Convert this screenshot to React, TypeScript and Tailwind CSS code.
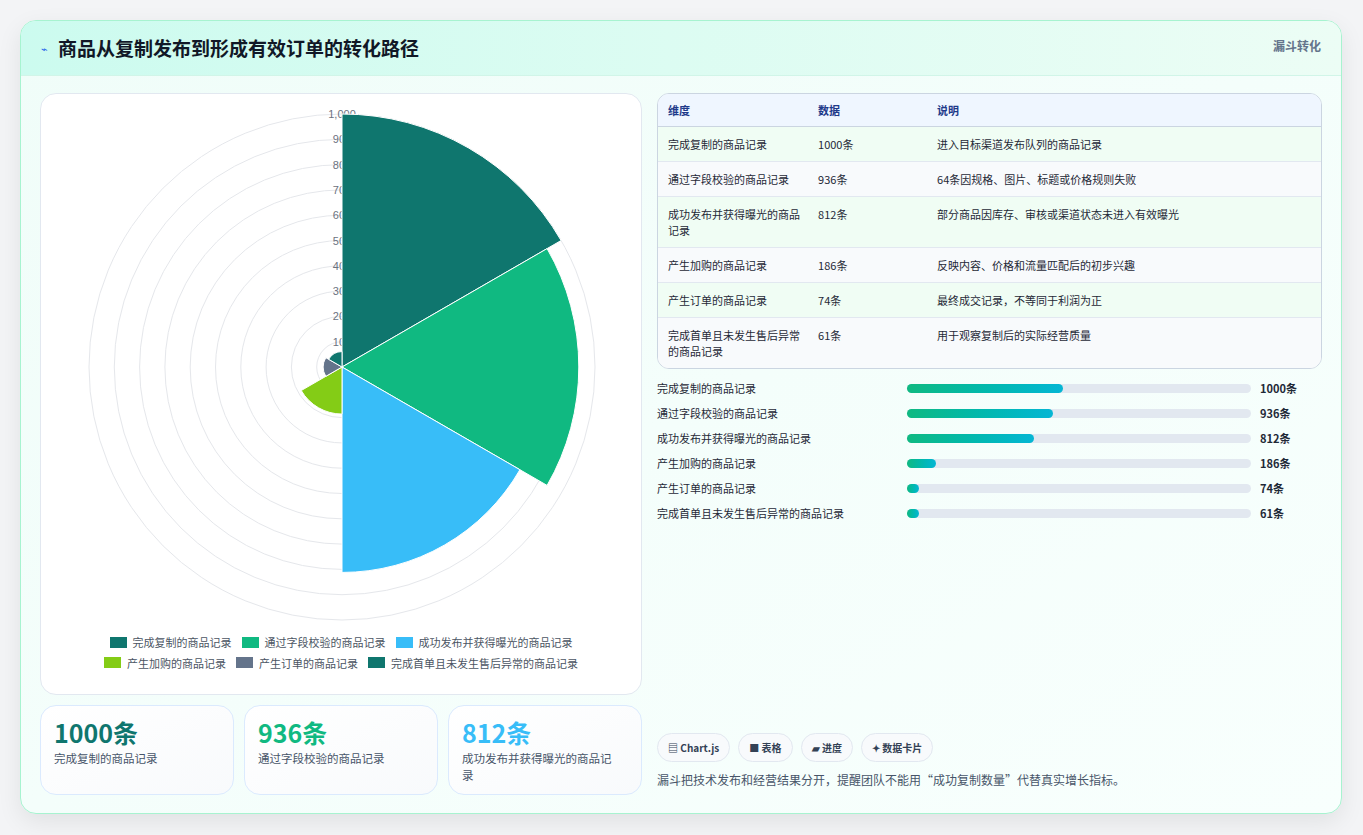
import React from "react";

const C = { cx: 301, cy: 273, R: 253 };
const data = [
  { label: "完成复制的商品记录", v: 1000, color: "#0f766e", note: "进入目标渠道发布队列的商品记录" },
  { label: "通过字段校验的商品记录", v: 936, color: "#10b981", note: "64条因规格、图片、标题或价格规则失败" },
  { label: "成功发布并获得曝光的商品记录", v: 812, color: "#38bdf8", note: "部分商品因库存、审核或渠道状态未进入有效曝光" },
  { label: "产生加购的商品记录", v: 186, color: "#84cc16", note: "反映内容、价格和流量匹配后的初步兴趣" },
  { label: "产生订单的商品记录", v: 74, color: "#64748b", note: "最终成交记录，不等同于利润为正" },
  { label: "完成首单且未发生售后异常的商品记录", v: 61, color: "#0f766e", note: "用于观察复制后的实际经营质量" },
];

function wedge(i: number, v: number) {
  const r = (v / 1000) * C.R;
  const a0 = ((i * 60 - 90) * Math.PI) / 180;
  const a1 = (((i + 1) * 60 - 90) * Math.PI) / 180;
  const x0 = C.cx + r * Math.cos(a0), y0 = C.cy + r * Math.sin(a0);
  const x1 = C.cx + r * Math.cos(a1), y1 = C.cy + r * Math.sin(a1);
  return `M${C.cx},${C.cy} L${x0},${y0} A${r},${r} 0 0 1 ${x1},${y1} Z`;
}

const font = { fontFamily: '"Noto Sans CJK SC", "Noto Sans", sans-serif' };

export default function App() {
  return (
    <div className="w-[1363px] h-[835px] bg-[#f3f4f6] p-5 pb-5" style={font}>
      <div className="h-[794px] w-[1322px] rounded-2xl border border-[#a7f3d0] bg-gradient-to-br from-[#f0fdf9] to-[#f8fffd] shadow-[0_8px_24px_rgba(0,0,0,0.08)] overflow-hidden flex flex-col">
        <div className="h-[55px] flex items-center justify-between px-5 bg-gradient-to-r from-[#ccfbef] to-[#ecfdf5] border-b border-[#d1f5e8]">
          <div className="flex items-center gap-[10px]">
            <span className="text-[11px] text-[#2563eb]">⌁</span>
            <span className="text-[19px] font-bold text-[#111827]">商品从复制发布到形成有效订单的转化路径</span>
          </div>
          <span className="text-[12px] font-semibold text-[#64748b] self-start mt-4">漏斗转化</span>
        </div>
        <div className="flex gap-[15px] px-[19px] pt-[17px]">
          <div className="w-[603px] flex flex-col gap-[10px]">
            <div className="h-[602px] bg-white rounded-2xl border border-[#e2e8f0] flex flex-col items-center">
              <svg width="600" height="530">
                {Array.from({ length: 10 }).map((_, k) => (
                  <circle key={k} cx={C.cx} cy={C.cy} r={((k + 1) / 10) * C.R} fill="none" stroke="#e5e7eb" strokeWidth="1" />
                ))}
                {Array.from({ length: 10 }).map((_, k) => {
                  const val = (k + 1) * 100;
                  return (
                    <text key={k} x={C.cx} y={C.cy - ((k + 1) / 10) * C.R + 4} textAnchor="middle" fontSize="11" fill="#6b7280" fontFamily="Liberation Sans, sans-serif">
                      {val === 1000 ? "1,000" : val}
                    </text>
                  );
                })}
                {data.map((d, i) => (
                  <path key={i} d={wedge(i, d.v)} fill={d.color} stroke="#fff" strokeWidth="1" />
                ))}
              </svg>
              <div className="mt-[10px] flex flex-wrap justify-center gap-x-[10px] gap-y-[4px] w-[540px] text-[11px] text-[#4b5563]">
                {data.map((d, i) => (
                  <div key={i} className="flex items-center gap-[6px]">
                    <span className="w-[17px] h-[11px]" style={{ background: d.color }} />
                    {d.label}
                  </div>
                ))}
              </div>
            </div>
            <div className="grid grid-cols-3 gap-[10px]">
              {data.slice(0, 3).map((d, i) => (
                <div key={i} className="h-[90px] rounded-2xl border border-[#dbeafe] bg-gradient-to-br from-white to-[#f8fafc] px-[13px] pr-[20px] pt-[8px]">
                  <div className="text-[25px] font-bold leading-[36px]" style={{ color: d.color }}>{d.v}条</div>
                  <div className="text-[11.5px] text-[#475569] leading-[17px]">{d.label}</div>
                </div>
              ))}
            </div>
          </div>
          <div className="w-[666px] flex flex-col">
            <div className="rounded-xl border border-[#cbd5e1] overflow-hidden bg-white text-[11px]">
              <div className="flex h-[33px] items-center bg-[#eff6ff] text-[#1e3a8a] font-semibold border-b border-[#cbd5e1]">
                <div className="w-[160px] pl-[10px]">维度</div>
                <div className="w-[119px]">数据</div>
                <div className="flex-1">说明</div>
              </div>
              {data.map((d, i) => (
                <div key={i} className={`flex py-[9px] text-[#1f2937] border-b border-[#e2e8f0] last:border-b-0 leading-[16px] ${i % 2 === 0 ? "bg-[#f0fdf4]" : "bg-[#f8fafc]"}`}>
                  <div className="w-[160px] pl-[10px] pr-[12px]">{d.label}</div>
                  <div className="w-[119px]">{d.v}条</div>
                  <div className="flex-1">{d.note}</div>
                </div>
              ))}
            </div>
            <div className="mt-[11px] flex flex-col gap-[8px] text-[11px] text-[#1f2937]">
              {data.map((d, i) => (
                <div key={i} className="flex items-center h-[17px]">
                  <div className="w-[250px]">{d.label}</div>
                  <div className="w-[344px] h-[9px] rounded-full bg-[#e2e8f0]">
                    <div className="h-full rounded-full bg-gradient-to-r from-[#10b981] to-[#06b6d4]" style={{ width: Math.max(12, (d.v / 1000) * 156) }} />
                  </div>
                  <div className="ml-[9px] font-bold">{d.v}条</div>
                </div>
              ))}
            </div>
            <div className="mt-[211px] flex gap-[8px] text-[10px] font-semibold text-[#334155]">
              {["▤ Chart.js", "■ 表格", "▰ 进度", "✦ 数据卡片"].map((t) => (
                <span key={t} className="h-[29px] px-[10px] flex items-center rounded-full border border-[#e2e8f0] bg-[#f8fafc]">{t}</span>
              ))}
            </div>
            <div className="mt-[9px] text-[12px] text-[#475569]">漏斗把技术发布和经营结果分开，提醒团队不能用“成功复制数量”代替真实增长指标。</div>
          </div>
        </div>
      </div>
    </div>
  );
}
